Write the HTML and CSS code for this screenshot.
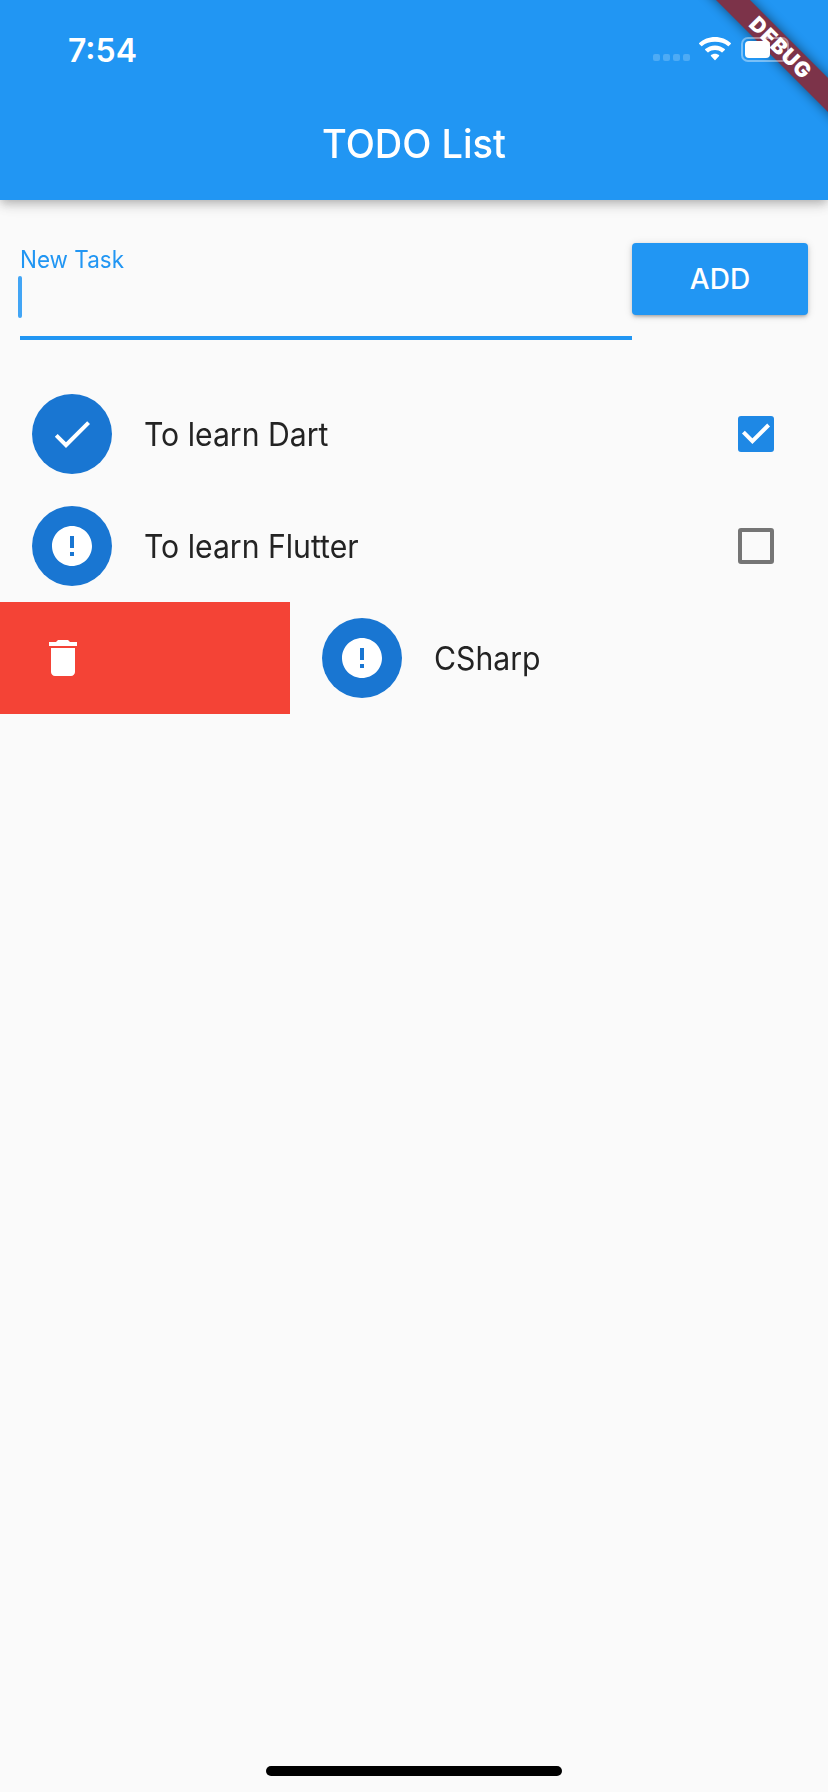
FILE: index.html
```html
<!DOCTYPE html>
<html lang="en">
<head>
<meta charset="utf-8">
<title>TODO List</title>
<link rel="stylesheet" href="styles.css">
</head>
<body>
<svg class="symbols" aria-hidden="true">
  <symbol id="check" viewBox="0 0 24 24"><path d="M9 16.17L4.83 12l-1.42 1.41L9 19 21 7l-1.41-1.41z"/></symbol>
  <symbol id="error" viewBox="0 0 24 24"><path d="M12 2C6.48 2 2 6.48 2 12s4.48 10 10 10 10-4.480 10-10S17.52 2 12 2zm1 15h-2v-2h2v2zm0-4h-2V7h2v6z"/></symbol>
  <symbol id="delete" viewBox="0 0 24 24"><path d="M6 19c0 1.1.9 2 2 2h8c1.1 0 2-.9 2-2V7H6v12zM19 4h-3.500l-1-1h-5l-1 1H5v2h14V4z"/></symbol>
</svg>
<div class="screen">
  <header class="app-bar">
    <div class="status-bar">
      <span class="time">7:54</span>
      <div class="status-icons">
        <div class="cellular"><i></i><i></i><i></i><i></i></div>
        <svg class="wifi" viewBox="0 0 32 24">
          <path d="M16 0C9.900 0 4.300 2.300.200 6.100q-.4.400 0 .8L2.300 9q.4.400.8 0C6.500 5.900 11 4.700 16 4.700S25.500 5.900 28.900 9q.4.400.8 0L31.800 6.900q.4-.4 0-.8C27.700 2.300 22.100 0 16 0z"/>
          <path d="M16 8.400c-3.800 0-7.200 1.400-9.800 3.700q-.4.400 0 .8l2.400 2.400q.4.400.8 0c1.800-1.600 4-2.300 6.600-2.300s4.800.7 6.600 2.300q.4.400.8 0l2.400-2.400q.4-.4 0-.8C23.200 9.800 19.800 8.400 16 8.400z"/>
          <path d="M16 16.800c-1.600 0-3 .5-4.100 1.500q-.4.400 0 .8l3.700 3.900q.4.400.8 0l3.700-3.900q.4-.4 0-.8c-1.100-1-2.500-1.500-4.100-1.500z"/>
        </svg>
        <div class="battery"><div class="battery-level"></div></div>
      </div>
    </div>
    <h1 class="title">TODO List</h1>
  </header>

  <main class="content">
    <form class="new-task">
      <div class="field">
        <label class="field-label">New Task</label>
        <div class="cursor"></div>
      </div>
      <button class="add" type="button">ADD</button>
    </form>

    <ul class="tasks">
      <li class="task">
        <span class="avatar"><svg class="icon"><use href="#check"/></svg></span>
        <span class="task-name">To learn Dart</span>
        <span class="checkbox checked"><svg class="tick" viewBox="0 0 36 36"><path d="M5.400 16.200L14.400 25.200L30.600 9"/></svg></span>
      </li>
      <li class="task">
        <span class="avatar"><svg class="icon"><use href="#error"/></svg></span>
        <span class="task-name">To learn Flutter</span>
        <span class="checkbox"></span>
      </li>
      <li class="dismissible">
        <div class="delete-area"><svg class="icon"><use href="#delete"/></svg></div>
        <div class="task">
          <span class="avatar"><svg class="icon"><use href="#error"/></svg></span>
          <span class="task-name">CSharp</span>
        </div>
      </li>
    </ul>
  </main>
  <div class="home-indicator"></div>

  <svg class="debug-banner" viewBox="0 0 148 148">
    <defs><filter id="soft" x="-50%" y="-200%" width="200%" height="500%"><feGaussianBlur stdDeviation="6"/></filter></defs>
    <g transform="translate(99 46) rotate(45)">
      <rect class="banner-shadow" x="-110" y="-12" width="220" height="24" filter="url(#soft)"/>
      <rect class="banner" x="-110" y="-12" width="220" height="24"/>
      <text class="banner-text" x="2.500" y="7.500">DEBUG</text>
    </g>
  </svg>
</div>
</body>
</html>
```
FILE: styles.css
```css
* { box-sizing: border-box; }
body {
  margin: 0;
  background: #fafafa;
  font-family: Inter, "Liberation Sans", sans-serif;
  color: #232323;
}
.symbols { display: none; }
.screen {
  position: relative;
  display: flex;
  flex-direction: column;
  width: 828px;
  height: 1792px;
  overflow: hidden;
}
.app-bar {
  flex: none;
  height: 200px;
  background: #2196f3;
  color: #fff;
  box-shadow: 0 3px 8px -2px rgba(0,0,0,.17), 0 6px 10px rgba(0,0,0,.12), 0 2px 18px rgba(0,0,0,.08);
}
.status-bar {
  display: flex;
  justify-content: space-between;
  height: 88px;
  padding: 0 35px 0 68px;
}
.time {
  padding-top: 31px;
  font-size: 32px;
  line-height: 40px;
  font-weight: 600;
}
.status-icons { display: flex; align-items: flex-start; padding-top: 37px; }
.cellular { display: flex; gap: 3px; padding-top: 17px; margin-right: 9px; }
.cellular i { width: 7px; height: 7px; border-radius: 2px; background: #4dabf5; }
.wifi { width: 32px; height: 24px; margin-right: 10px; fill: #fff; }
.battery {
  position: relative;
  z-index: 2;
  width: 48px;
  height: 25px;
  padding: 2px;
  border: 2px solid rgba(255,255,255,.4);
  border-radius: 7px;
  margin-right: 4px;
}
.battery-level { width: 25px; height: 17px; border-radius: 4px; background: #fff; }
.title {
  margin: 0;
  padding-top: 32px;
  font-size: 40px;
  line-height: 48px;
  font-weight: 500;
  text-align: center;
  transform: scaleX(.95);
}
.content { flex: 1; padding-top: 43px; }
.new-task { display: flex; align-items: flex-start; height: 97px; padding: 0 20px; }
.field {
  flex: 1;
  height: 97px;
  border-bottom: 4px solid #2196f3;
}
.field-label {
  display: block;
  height: 33px;
  line-height: 34px;
  font-size: 24px;
  color: #2196f3;
  transform: scaleX(.936);
  transform-origin: left;
}
.cursor { width: 4px; height: 42px; margin-left: -2px; border-radius: 2px; background: #42a5f5; }
.add {
  width: 176px;
  height: 72px;
  padding: 0;
  border: 0;
  border-radius: 4px;
  background: #2196f3;
  color: #fff;
  font: 500 28px/72px Inter, "Liberation Sans", sans-serif;
  box-shadow: 0 3px 3px -2px rgba(0,0,0,.2), 0 2px 4px rgba(0,0,0,.14), 0 1px 8px rgba(0,0,0,.12);
}
.tasks { margin: 38px 0 0; padding: 0; list-style: none; }
.task { display: flex; align-items: center; height: 112px; padding: 0 54px 0 32px; }
.avatar {
  display: flex;
  align-items: center;
  justify-content: center;
  width: 80px;
  height: 80px;
  border-radius: 50%;
  background: #1976d2;
}
.icon { width: 48px; height: 48px; fill: #fff; }
.task-name {
  flex: 1;
  margin-left: 32px;
  padding-top: 2px;
  font-size: 32px;
  line-height: 48px;
  transform: scaleX(.943);
  transform-origin: left;
}
.checkbox { width: 36px; height: 36px; border: 4px solid #757575; border-radius: 3px; }
.checked { border: 0; background: #1e88e5; }
.tick { display: block; width: 36px; height: 36px; fill: none; stroke: #fff; stroke-width: 4; }
.dismissible { display: flex; }
.delete-area {
  display: flex;
  align-items: center;
  width: 290px;
  height: 112px;
  padding-left: 39px;
  background: #f44336;
}
.home-indicator {
  width: 296px;
  height: 10px;
  margin: 0 auto 16px;
  border-radius: 5px;
  background: #000;
}
.debug-banner { position: absolute; top: 0; right: 0; width: 148px; height: 148px; }
.banner-shadow { fill: #000; opacity: .5; }
.banner { fill: #7c3349; }
.banner-text { fill: #fff; font-size: 21px; font-weight: 900; letter-spacing: 1px; text-anchor: middle; }
```
